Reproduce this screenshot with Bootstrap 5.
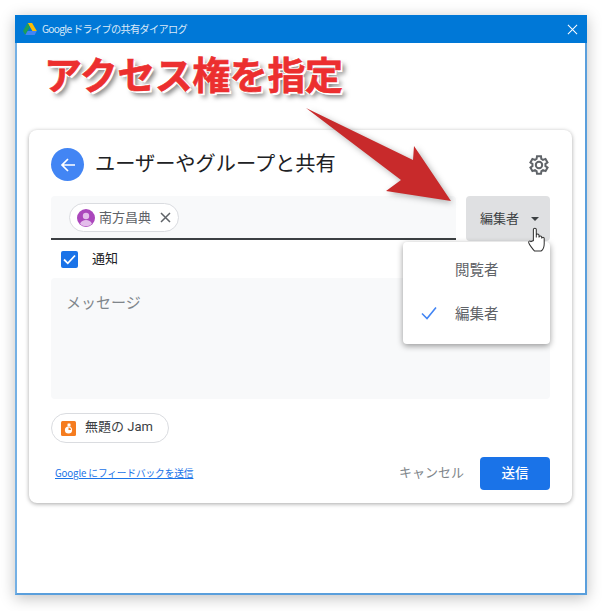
<!DOCTYPE html>
<html lang="ja">
<head>
<meta charset="utf-8">
<title>Google ドライブの共有ダイアログ</title>
<link rel="stylesheet" href="https://cdn.jsdelivr.net/npm/bootstrap@5.3.0/dist/css/bootstrap.min.css">
<style>
html,body{height:100%;background:#fff;}
body{font-family:"Noto Sans CJK JP","Liberation Sans",sans-serif;color:#3c4043;padding:15px 15px 16px 15px;overflow:hidden;}
.win-frame{position:relative;width:572px;height:580px;border:2px solid #5a9fdc;border-left:2px solid #74b0e4;border-top:0;background:#fff;box-shadow:0 3px 14px rgba(0,0,0,.25);}
.win-bar{height:28px;background:#0078d7;color:#dbe9f7;font-size:10.200px;margin-left:-2px;margin-right:-2px;padding:0 9px 0 8px;}
.win-title{letter-spacing:-.7px;margin-left:5px;}
.win-close{width:11px;height:11px;}
.callout{position:absolute;left:27px;top:36px;font-size:38px;line-height:44px;font-weight:700;color:#ec2f2f;letter-spacing:-.45px;white-space:nowrap;-webkit-text-stroke:.6px #ec2f2f;text-shadow:-1px -1px 0 #fff,1px -1px 0 #fff,-1px 1px 0 #fff,2px 2px 0 #fff,4px 4px 5px rgba(0,0,0,.55);}
.big-arrow{position:absolute;left:289px;top:93px;width:160px;height:100px;z-index:3;filter:drop-shadow(2px 2px 3px rgba(0,0,0,.3));}
.share-panel{position:absolute;left:12px;top:115px;width:543px;height:373px;background:#fff;border-radius:8px;box-shadow:0 1px 4px rgba(0,0,0,.35);padding:18px 22px 13px;}
.back-dot{width:33px;height:33px;border-radius:50%;background:#4285f4;flex:none;}
.panel-title{font-size:20.200px;line-height:33px;color:#202124;margin-left:11px;padding-bottom:5px;}
.gear{width:24px;height:24px;margin-right:0;}
.head-row{height:33px;}
.to-row{margin-top:15px;height:45px;gap:10px;}
.to-field{flex:1;background:#f8f9fa;border-bottom:2px solid #3c4043;border-radius:4px 4px 0 0;padding:7px 0 0 18px;height:44px;}
.person-chip{display:inline-flex;align-items:center;height:29px;width:110px;border:1px solid #dadce0;border-radius:15px;background:#fff;padding-left:7px;font-size:13px;color:#5f6368;}
.person-name{margin-left:4px;padding-bottom:2px;}
.chip-x{margin-left:9px;width:11px;height:11px;}
.role-btn{width:84px;height:45px;background:#dfe0e2;border-radius:4px;font-size:13px;color:#3c4043;border:0;padding:0 0 2px 14px;display:flex;align-items:center;}
.caret-mini{width:0;height:0;border-left:4px solid transparent;border-right:4px solid transparent;border-top:4px solid #3c4043;margin-left:12px;margin-top:2px;}
.notify-row{height:37px;padding-left:10px;font-size:13px;color:#202124;margin-bottom:0;}
.tick-box{width:17px;height:17px;background:#1a73e8;border-radius:2px;margin-right:14px;}
.notify-txt{padding-bottom:3px;}
.msg-box{height:121px;background:#f8f9fa;border-radius:4px;padding:12px 15px;font-size:15px;color:#80868b;line-height:24px;}
.jam-chip{display:inline-flex;align-items:center;height:30px;width:118px;margin-top:14px;border:1px solid #dadce0;border-radius:15px;padding-left:9px;font-size:13px;color:#3c4043;}
.jam-ico{width:15px;height:15px;margin-right:9px;}
.jam-txt{font-family:Roboto,"Noto Sans CJK JP",sans-serif;padding-bottom:2px;}
.foot-row{margin-top:13px;height:34px;}
.fb-link{font-size:9.700px;color:#1a73e8;margin-left:4px;text-decoration:underline;letter-spacing:-.12px;}
.cancel-lnk{font-size:13px;color:#80868b;margin-right:16px;padding-bottom:2px;}
.send-btn{width:70px;height:33px;background:#1a73e8;border:0;border-radius:4px;color:#fff;font-size:13.500px;padding:0 0 2px;font-weight:500;}
.role-menu{position:absolute;left:386px;top:227px;width:147px;height:102px;background:#fff;border-radius:4px;box-shadow:0 2px 6px rgba(0,0,0,.4);z-index:2;font-size:14.500px;color:#5f6368;padding-top:5px;}
.role-item{height:44px;padding-left:52px;display:flex;align-items:center;position:relative;}
.check-mark{position:absolute;left:18px;top:15px;width:16px;height:14px;}
.hand{position:absolute;left:510px;top:212px;width:19px;height:25px;z-index:4;}
</style>
</head>
<body>
<div class="win-frame">
  <div class="win-bar d-flex align-items-center">
    <svg width="14" height="13" viewBox="0 0 14 13"><path d="M4.700 0h4.400l4.700 8H9.400z" fill="#fbbc04"/><path d="M4.700 0L0 8l2.300 4 4.600-8z" fill="#1e9e58"/><path d="M2.300 12h9.300l2.200-4H4.600z" fill="#4285f4"/></svg>
    <span class="win-title">Google ドライブの共有ダイアログ</span>
    <svg class="win-close ms-auto" viewBox="0 0 12 12"><path d="M1 1l10 10M11 1L1 11" stroke="#fff" stroke-width="1.100"/></svg>
  </div>
  <div class="callout">アクセス権を指定</div>
  <svg class="big-arrow" viewBox="0 0 160 100"><path d="M0 0L107 52 108 38 145 93 80 83 95 72z" fill="#c82a2b"/></svg>
  <div class="share-panel">
    <div class="head-row d-flex align-items-center">
      <div class="back-dot d-flex align-items-center justify-content-center">
        <svg width="16" height="16" viewBox="0 0 16 16"><path d="M15 8H2M8 2L2 8l6 6" fill="none" stroke="#fff" stroke-width="1.700"/></svg>
      </div>
      <div class="panel-title">ユーザーやグループと共有</div>
      <svg class="gear ms-auto" viewBox="0 0 24 24"><path d="M19.400 13a7.500 7.500 0 0 0 0-2l2.100-1.600-2-3.500-2.500 1a7.500 7.500 0 0 0-1.700-1L15 3.200h-4l-.4 2.700a7.500 7.500 0 0 0-1.700 1l-2.500-1-2 3.500L6.500 11a7.500 7.500 0 0 0 0 2l-2.100 1.600 2 3.500 2.500-1a7.500 7.500 0 0 0 1.700 1l.4 2.700h4l.4-2.700a7.500 7.500 0 0 0 1.700-1l2.500 1 2-3.500z" fill="none" stroke="#5f6368" stroke-width="2"/><circle cx="13" cy="12" r="3.200" fill="none" stroke="#5f6368" stroke-width="2"/></svg>
    </div>
    <div class="to-row d-flex">
      <div class="to-field">
        <span class="person-chip">
          <svg width="18" height="18" viewBox="0 0 18 18"><circle cx="9" cy="9" r="9" fill="#ab47bc"/><circle cx="9" cy="7" r="3.200" fill="#e4bdeb"/><path d="M3 15c1-3 3.500-4 6-4s5 1 6 4a9 9 0 0 1-12 0z" fill="#e4bdeb"/></svg>
          <span class="person-name">南方昌典</span>
          <svg class="chip-x" viewBox="0 0 11 11"><path d="M1 1l9 9M10 1l-9 9" stroke="#5f6368" stroke-width="1.500"/></svg>
        </span>
      </div>
      <button type="button" class="role-btn">編集者<span class="caret-mini"></span></button>
    </div>
    <label class="notify-row d-flex align-items-center">
      <span class="tick-box d-flex align-items-center justify-content-center"><svg width="13" height="11" viewBox="0 0 13 11"><path d="M1 5.500l3.800 3.800L12 1.500" fill="none" stroke="#fff" stroke-width="1.800"/></svg></span>
      <span class="notify-txt">通知</span>
    </label>
    <div class="msg-box">メッセージ</div>
    <span class="jam-chip">
      <svg class="jam-ico" viewBox="0 0 15 15"><rect width="15" height="15" rx="1.500" fill="#f57c1f"/><circle cx="7.500" cy="9" r="3.600" fill="#fff"/><rect x="6.500" y="2.500" width="3" height="3" rx=".5" fill="#fff"/><path d="M7.500 9V6.500a2.500 2.500 0 0 1 2.500 2.500z" fill="#f57c1f"/></svg>
      <span class="jam-txt">無題の Jam</span>
    </span>
    <div class="foot-row d-flex align-items-center">
      <a class="fb-link" href="#">Google にフィードバックを送信</a>
      <span class="cancel-lnk ms-auto">キャンセル</span>
      <button type="button" class="send-btn">送信</button>
    </div>
  </div>
  <div class="role-menu">
    <div class="role-item">閲覧者</div>
    <div class="role-item"><svg class="check-mark" viewBox="0 0 16 14"><path d="M1 7.500l5 5L15 1.500" fill="none" stroke="#4285f4" stroke-width="1.600"/></svg>編集者</div>
  </div>
  <svg class="hand" viewBox="0 0 18 24"><path d="M6 13V2.500a1.400 1.400 0 0 1 2.800 0V10l0-2a1.300 1.300 0 0 1 2.600 0v2a1.300 1.300 0 0 1 2.600 0v1a1.200 1.200 0 0 1 2.400 0v5c0 3-1.500 6-3 7H7c-1-1-5-6-5.500-8-.3-1.500 1.200-2 2.200-1z" fill="#fff" stroke="#333" stroke-width="1"/></svg>
</div>
</body>
</html>
